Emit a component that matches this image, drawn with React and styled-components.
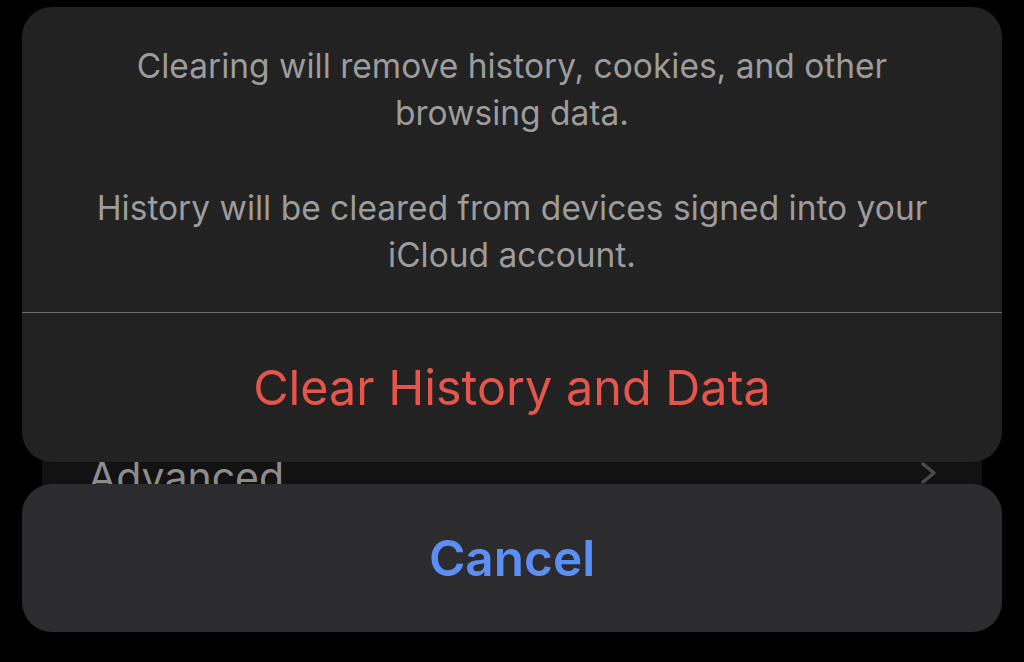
import React from "react";
import styled, { createGlobalStyle } from "styled-components";

const GlobalStyle = createGlobalStyle`
    html, body {
        margin: 0;
        padding: 0;
        background: #000;
    }
    body {
        font-family: Inter, "Liberation Sans", sans-serif;
        -webkit-font-smoothing: antialiased;
    }
`

const Screen = styled.div`
    position: relative;
    width: 1024px;
    height: 662px;
    overflow: hidden;
    background: #000;
`

const SettingsGroup = styled.div`
    margin: 400px 42px 0;
    background: #121212;
    border-radius: 20px;
`

const SettingsRow = styled.div`
    display: flex;
    align-items: flex-start;
    justify-content: space-between;
    height: 120px;
    padding: 52px 44px 0 46px;
    box-sizing: border-box;
    font-size: 41px;
    color: #8c8c8c;
`

const Chevron = styled.svg`
    width: 18px;
    height: 22px;
    margin-top: 10px;
`

const Sheet = styled.div`
    position: absolute;
    left: 22px;
    top: 7px;
    width: 980px;
    display: flex;
    flex-direction: column;
    gap: 22px;
`

const Group = styled.div`
    background: ${p => p.$cancel ? "#2c2c2e" : "#222222"};
    border-radius: 30px;
    overflow: hidden;
`

const Message = styled.div`
    padding: 36px 40px 33px;
    text-align: center;
    font-size: 33.5px;
    line-height: 47px;
    color: #9c9c9c;
    border-bottom: 1px solid #6e6e6e;
`

const Gap = styled.div`
    height: 48px;
`

const ActionButton = styled.div`
    display: flex;
    align-items: center;
    justify-content: center;
    height: ${p => p.$height}px;
    font-size: ${p => p.$cancel ? 49.5 : 48.5}px;
    font-weight: ${p => p.$cancel ? 600 : 400};
    color: ${p => p.$cancel ? "#5b8ff5" : "#e5554b"};
`

const App = () => {
    return (
        <Screen>
            <GlobalStyle />
            <SettingsGroup>
                <SettingsRow>
                    <span>Advanced</span>
                    <Chevron viewBox="0 0 18 22">
                        <path d="M3 2 L14 11 L3 20" fill="none" stroke="#4a4a4a" strokeWidth="3.5" strokeLinecap="round" strokeLinejoin="round" />
                    </Chevron>
                </SettingsRow>
            </SettingsGroup>
            <Sheet>
                <Group>
                    <Message>
                        Clearing will remove history, cookies, and other<br />
                        browsing data.
                        <Gap />
                        History will be cleared from devices signed into your<br />
                        iCloud account.
                    </Message>
                    <ActionButton $height={149}>Clear History and Data</ActionButton>
                </Group>
                <Group $cancel>
                    <ActionButton $cancel $height={148}>Cancel</ActionButton>
                </Group>
            </Sheet>
        </Screen>
    );
}

export default App;
